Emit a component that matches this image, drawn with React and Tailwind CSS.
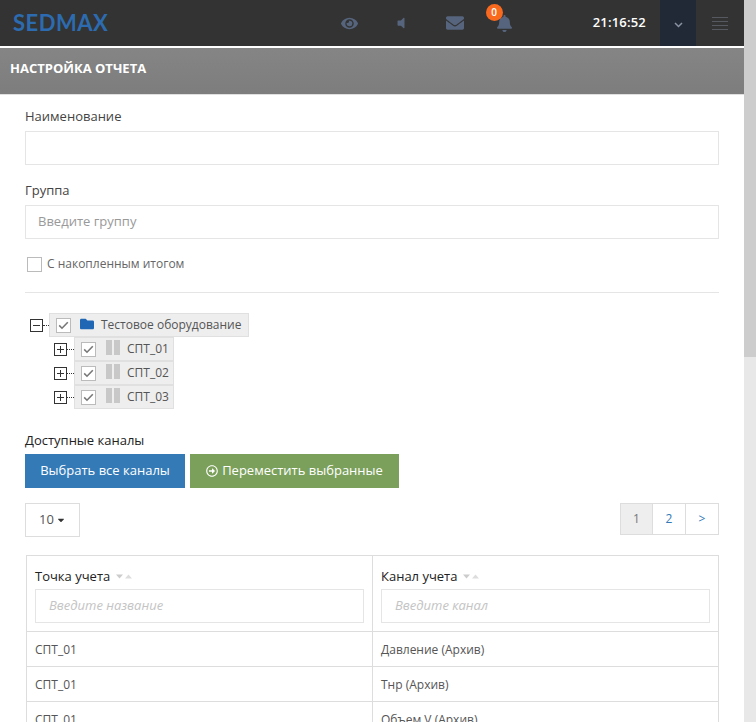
import React from 'react';
import { FaEye, FaVolumeOff, FaEnvelope, FaBell, FaFolder, FaCaretDown, FaRegArrowAltCircleRight } from 'react-icons/fa';

function Check() {
  return (
    <span className="w-[15px] h-[15px] border border-[#bbb] bg-white flex items-center justify-center shrink-0">
      <svg width="11" height="9" viewBox="0 0 11 9" fill="none">
        <path d="M1.2 4.4 L4 7.2 L9.8 1.2" stroke="#777" strokeWidth="1.6" />
      </svg>
    </span>
  );
}

function Toggle({ minus }) {
  return (
    <span className="relative w-[13px] h-[13px] border border-[#333] bg-white shrink-0">
      <span className="absolute left-[2px] top-[5px] w-[7px] h-px bg-[#333]" />
      {!minus && <span className="absolute left-[5px] top-[2px] w-px h-[7px] bg-[#333]" />}
    </span>
  );
}

function Leaf({ name }) {
  return (
    <div className="flex items-center h-6">
      <Toggle />
      <span className="w-[7px] border-t border-dotted border-[#333] mr-0" />
      <div className="flex items-center h-6 w-[100px] bg-[#eee] border border-[#e0e0e0] pl-[6px]">
        <Check />
        <span className="flex gap-[2px] ml-[10px] mr-[7px] -mt-1">
          <span className="w-[6px] h-[15px] bg-[#c8c8c8]" />
          <span className="w-[6px] h-[15px] bg-[#c8c8c8]" />
        </span>
        <span className="text-xs text-[#555]">{name}</span>
      </div>
    </div>
  );
}

function Row({ point, channel }) {
  return (
    <div className="grid grid-cols-[346px_1fr] h-[35px] border-t border-[#ddd] text-xs text-[#555]">
      <div className="pl-2 pt-[10px] border-r border-[#ddd]">{point}</div>
      <div className="pl-2 pt-[10px]">{channel}</div>
    </div>
  );
}

function HeadCell({ title, placeholder, last }) {
  return (
    <div className={`px-2 pt-[11px] ${last ? '' : 'border-r border-[#ddd]'}`}>
      <div className="flex items-center h-[19px] text-[13px] text-[#222]">
        {title}
        <svg className="ml-[6px]" width="16" height="5" viewBox="0 0 16 5">
          <path d="M0 0.5 H7 L3.5 4.5 Z" fill="#ccc" />
          <path d="M9 4.5 H16 L12.5 0.5 Z" fill="#ddd" />
        </svg>
      </div>
      <div className="h-[34px] mt-[3px] border border-[#e5e5e5] pl-[13px] flex items-center text-[13px] italic text-[#c4c4c4]">
        {placeholder}
      </div>
    </div>
  );
}

export default function App() {
  return (
    <div className="flex h-[722px] overflow-hidden bg-white font-['Open_Sans',sans-serif]">
      <div className="flex-1 min-w-0">
        <header className="h-[46px] bg-[#333] flex items-center">
          <span className="ml-[13px] text-[22px] leading-none font-bold tracking-[0.5px] text-[#2c6bb0] font-['Lato',sans-serif]">SEDMAX</span>
          <div className="flex-1" />
          <FaEye className="text-[#56657d] w-[17px] h-[17px] mr-[36px]" />
          <FaVolumeOff className="text-[#56657d] w-[14px] h-[14px] mr-[38px]" />
          <FaEnvelope className="text-[#56657d] w-[18px] h-[18px] mr-[32px]" />
          <span className="relative mr-[80px]">
            <FaBell className="text-[#56657d] w-[17px] h-[17px]" />
            <span className="absolute -left-[10px] -top-[11px] w-[17px] h-[17px] rounded-full bg-[#f96a1f] text-white text-[10px] font-semibold flex items-center justify-center">0</span>
          </span>
          <span className="text-[13px] text-white mr-[14px] font-semibold tracking-[0.2px]">21:16:52</span>
          <div className="w-9 h-[46px] bg-[#212936] flex items-center justify-center pt-1">
            <svg width="9" height="6" viewBox="0 0 9 6" fill="none"><path d="M1 1 L4.5 4.5 L8 1" stroke="#8a93a3" strokeWidth="1.5" /></svg>
          </div>
          <div className="w-[16px] ml-[16px] mr-[16px] flex flex-col gap-[3px]">
            <span className="h-px bg-[#56595f]" />
            <span className="h-px bg-[#56595f]" />
            <span className="h-px bg-[#56595f]" />
            <span className="h-px bg-[#56595f]" />
          </div>
        </header>

        <div className="mt-[2px] h-[47px] bg-gradient-to-b from-[#858585] to-[#7d7d7d] border-b border-[#e0e0e0] px-[10px] pt-[11px] text-[13px] leading-[18px] font-bold text-white">
          НАСТРОЙКА ОТЧЕТА
        </div>

        <main className="pl-[25px] w-[719px]">
          <div className="mt-[12px] text-[13px] leading-[18px] text-[#444]">Наименование</div>
          <div className="mt-[6px] h-[34px] border border-[#e5e5e5]" />
          <div className="mt-[16px] text-[13px] leading-[18px] text-[#444]">Группа</div>
          <div className="mt-[6px] h-[34px] border border-[#e5e5e5] pl-[12px] flex items-center text-[13px] text-[#999]">Введите группу</div>
          <div className="mt-[17px] flex items-center h-[16px] pl-[2px] text-xs text-[#666]">
            <span className="w-[15px] h-[15px] border border-[#bbb] mr-[5px]" />
            С накопленным итогом
          </div>
          <div className="mt-[20px] border-t border-[#e5e5e5]" />

          <div className="mt-[20px] pl-[5px]">
            <div className="flex items-center h-6">
              <Toggle minus />
              <span className="w-[6px] border-t border-dotted border-[#333]" />
              <div className="flex items-center h-6 w-[200px] bg-[#eee] border border-[#e0e0e0] pl-[6px]">
                <Check />
                <FaFolder className="text-[#1f66b5] w-[16px] h-[14px] ml-[8px] mr-[6px] -mt-[3px]" />
                <span className="text-xs text-[#555]">Тестовое оборудование</span>
              </div>
            </div>
            <div className="ml-[24px]">
              <Leaf name="СПТ_01" />
              <Leaf name="СПТ_02" />
              <Leaf name="СПТ_03" />
            </div>
          </div>

          <div className="mt-[22px] text-[13px] leading-[18px] text-[#222]">Доступные каналы</div>
          <div className="mt-[5px] flex gap-[5px]">
            <div className="w-[160px] h-[34px] bg-[#337ab7] bg-[#306ea8] text-white text-[13px] flex items-center justify-center">Выбрать все каналы</div>
            <div className="w-[209px] h-[34px] bg-[#7ba05b] text-white text-[13px] flex items-center justify-center">
              <FaRegArrowAltCircleRight className="w-[12px] h-[12px] mr-[4px]" />
              Переместить выбранные
            </div>
          </div>

          <div className="mt-[15px] flex justify-between items-start">
            <div className="w-[55px] h-[34px] border border-[#ddd] flex items-center justify-center text-[13px] text-[#555]">
              10
              <FaCaretDown className="w-[10px] h-[10px] ml-[2px] text-[#333]" />
            </div>
            <div className="flex h-[32px] border border-[#ddd] text-xs text-[#337ab7]">
              <span className="w-[32px] bg-[#eee] border-r border-[#ddd] flex items-center justify-center text-[#777]">1</span>
              <span className="w-[33px] border-r border-[#ddd] flex items-center justify-center">2</span>
              <span className="w-[32px] flex items-center justify-center">&gt;</span>
            </div>
          </div>

          <div className="mt-[18px] ml-[1px] border border-[#ddd] border-b-0">
            <div className="grid grid-cols-[346px_1fr] h-[75px]">
              <HeadCell title="Точка учета" placeholder="Введите название" />
              <HeadCell title="Канал учета" placeholder="Введите канал" last />
            </div>
            <Row point="СПТ_01" channel="Давление (Архив)" />
            <Row point="СПТ_01" channel="Тнр (Архив)" />
            <Row point="СПТ_01" channel="Объем V (Архив)" />
          </div>
        </main>
      </div>

      <div className="w-3 h-[722px] shrink-0 bg-[#e8e8e8]">
        <div className="h-[357px] bg-[#cdcdcd]" />
      </div>
    </div>
  );
}
